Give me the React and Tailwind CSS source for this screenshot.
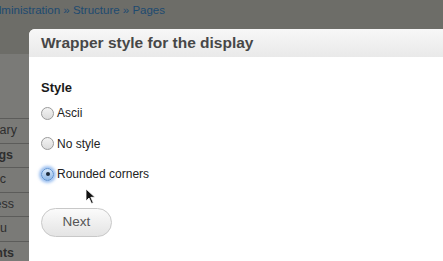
export default function App() {
  const sideItems = [
    { label: "Library", bold: false, pr: "pr-[12px]" },
    { label: "Settings", bold: true, pr: "pr-[16px]" },
    { label: "Public", bold: false, pr: "pr-[23px]" },
    { label: "Access", bold: false, pr: "pr-[15px]" },
    { label: "Menu", bold: false, pr: "pr-[22px]" },
    { label: "Contents", bold: true, pr: "pr-[15px]" },
  ];

  return (
    <div
      className="relative w-[443px] h-[261px] overflow-hidden bg-[#6d6d68] flex flex-col"
      style={{ fontFamily: '"Liberation Sans", Arial, sans-serif' }}
    >
      {/* Breadcrumb */}
      <div className="h-[29px] shrink-0 flex items-start pt-[2px]">
        <div className="w-[165px] flex justify-end overflow-hidden whitespace-nowrap text-[11.5px] leading-[16px] text-[#1d4a70]">
          Home » Administration » Structure » Pages
        </div>
      </div>

      <div className="flex flex-1 min-h-0">
        {/* Sidebar behind overlay */}
        <div className="w-[29px] shrink-0 flex flex-col overflow-hidden">
          <div className="h-[25px] shrink-0 bg-[#6d6d68]" />
          <div className="h-[64px] shrink-0 bg-[#7a7a77]" />
          {sideItems.map((item) => (
            <div
              key={item.label}
              className={`h-[24.5px] shrink-0 border-t border-[#5c5c5a] bg-[#7a7a77] flex items-center justify-end overflow-hidden whitespace-nowrap text-[12.5px] text-[#2e2e2e] ${item.pr}`}
            >
              <span className={item.bold ? "font-bold" : ""}>{item.label}</span>
            </div>
          ))}
        </div>

        {/* Dialog */}
        <div className="flex-1 flex flex-col bg-white rounded-tl-[6px] overflow-hidden">
          <div className="h-[28px] shrink-0 bg-gradient-to-b from-[#f7f7f7] to-[#e9e9e9] flex items-center pl-[12px] text-[15.5px] font-bold text-[#474747]">
            Wrapper style for the display
          </div>
          <div className="flex-1 bg-white pl-[12px] pt-[23px] text-[#1a1a1a]">
            <div className="text-[13px] font-bold leading-[16px]">Style</div>
            <div className="mt-[9px] flex flex-col gap-[14.5px]">
              <Radio label="Ascii" />
              <Radio label="No style" />
              <Radio label="Rounded corners" checked />
            </div>
            <button className="mt-[26px] w-[71px] h-[29px] rounded-full border border-[#c8c8c8] bg-gradient-to-b from-[#fbfbfb] to-[#e4e4e4] text-[13.5px] text-[#555] flex items-center justify-center">
              Next
            </button>
          </div>
        </div>
      </div>

      {/* Mouse cursor */}
      <svg
        className="absolute left-[85px] top-[188px]"
        width="11"
        height="17"
        viewBox="0 0 11 17"
      >
        <path
          d="M1 1 L1 13 L4 10 L6.5 15.5 L8.3 14.7 L5.8 9.3 L10 9.3 Z"
          fill="#111"
          stroke="#fff"
          strokeWidth="0.8"
        />
      </svg>
    </div>
  );
}

function Radio({ label, checked }) {
  return (
    <label className="flex items-center h-[16px] text-[12px] text-[#222]">
      {checked ? (
        <span className="w-[13px] h-[13px] rounded-full border border-[#5a8fd0] bg-gradient-to-b from-[#d5e6f8] to-[#8fb8e6] shadow-[0_0_3px_2px_rgba(90,150,230,0.6)] flex items-center justify-center">
          <span className="w-[4px] h-[4px] rounded-full bg-[#1c2a3a]" />
        </span>
      ) : (
        <span className="w-[13px] h-[13px] rounded-full border border-[#9a9a9a] bg-gradient-to-b from-[#f3f3f3] to-[#dcdcdc]" />
      )}
      <span className="ml-[3px]">{label}</span>
    </label>
  );
}
